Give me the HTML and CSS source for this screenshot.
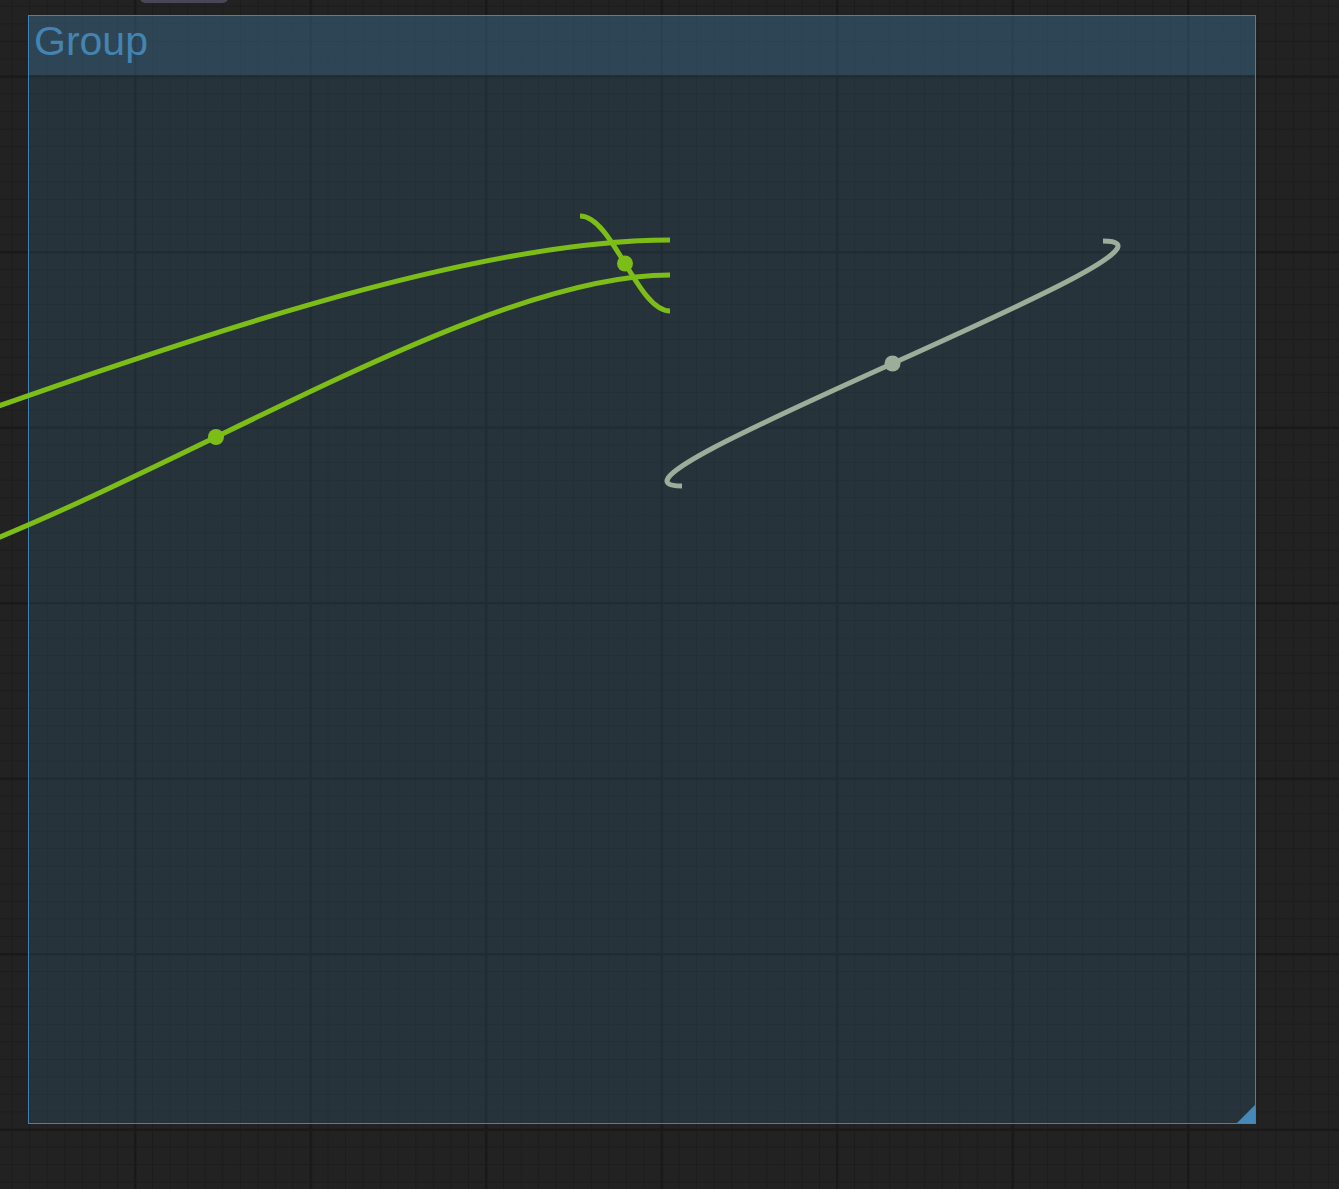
FILE: index.html
```html
<!DOCTYPE html>
<html lang="en">
<head>
<meta charset="UTF-8" />
<meta name="viewport" content="width=device-width, initial-scale=1" />
<title>Canvas</title>
<link rel="stylesheet" href="styles.css">
</head>
<body>

<div class="canvas">
  <svg class="grid" width="1339" height="1189">
    <defs>
      <pattern id="minor" patternUnits="userSpaceOnUse" x="11.65" y="5.8" width="17.55" height="17.55">
        <rect class="minor-line" x="0" y="0" width="1" height="17.55" />
        <rect class="minor-line" x="0" y="0" width="17.55" height="1" />
      </pattern>
      <pattern id="major" patternUnits="userSpaceOnUse" x="134" y="75.5" width="175.5" height="175.5">
        <rect class="major-line" x="0" y="0" width="2.5" height="175.5" />
        <rect class="major-line" x="0" y="0" width="175.5" height="2.5" />
      </pattern>
    </defs>
    <rect class="grid-bg" width="100%" height="100%" />
    <rect width="100%" height="100%" fill="url(#minor)" />
    <rect width="100%" height="100%" fill="url(#major)" />
  </svg>

  <div class="tab-pill"></div>

  <div class="group">
    <div class="group-title">Group</div>
    <div class="group-resize"></div>
  </div>

  <svg class="links" width="1339" height="1189">
    <path class="link link-green" d="M -900 652 C -494 652, 264 240, 670 240" />
    <path class="link link-green" d="M -238 599 C 3 599, 429 275, 670 275" />
    <path class="link link-green" d="M 580 216 C 612.7 216, 637.3 311, 670 311" />
    <path class="link link-gray" d="M 1103 241 C 1224.8 241, 560.2 486, 682 486" />
    <circle class="dot dot-green" cx="216" cy="437" r="8" />
    <circle class="dot dot-green" cx="625" cy="263.5" r="8" />
    <circle class="dot dot-gray" cx="892.5" cy="363.5" r="8" />
  </svg>
</div>

</body>
</html>
```

FILE: styles.css
```css
* {
  box-sizing: border-box;
}
body {
  margin: 0;
  padding: 0;
  background: #222222;
  font-family: 'Liberation Sans', Arial, sans-serif;
  overflow: hidden;
}
.canvas {
  position: relative;
  width: 1339px;
  height: 1189px;
  overflow: hidden;
}
.grid, .links {
  position: absolute;
  left: 0;
  top: 0;
  display: block;
}
.grid-bg {
  fill: #222222;
}
.minor-line {
  fill: #1c1c1c;
}
.major-line {
  fill: #191919;
}

/* little tab poking in from the top */
.tab-pill {
  position: absolute;
  left: 140px;
  top: -7px;
  width: 88px;
  height: 10px;
  border-radius: 6px;
  background: #474758;
}

.group {
  position: absolute;
  left: 28px;
  top: 15px;
  width: 1228px;
  height: 1109px;
  border: 1px solid #4183b2;
  background: rgba(63, 120, 158, 0.21);
}
.group-title {
  height: 59px;
  padding-left: 5px;
  font-size: 41px;
  line-height: 51px;
  color: #4384b1;
  background: rgba(63, 120, 158, 0.28);
}
.group-resize {
  position: absolute;
  right: 0;
  bottom: 0;
  width: 18px;
  height: 18px;
  background: #4689b8;
  clip-path: polygon(100% 0, 100% 100%, 0 100%);
}

.links {
  pointer-events: none;
}
.link {
  fill: none;
  stroke-width: 5;
  stroke-linecap: butt;
}
.link-green {
  stroke: #7dbd17;
}
.link-gray {
  stroke: #9cad99;
}
.dot-green {
  fill: #7dbd17;
}
.dot-gray {
  fill: #9cad99;
}
```
